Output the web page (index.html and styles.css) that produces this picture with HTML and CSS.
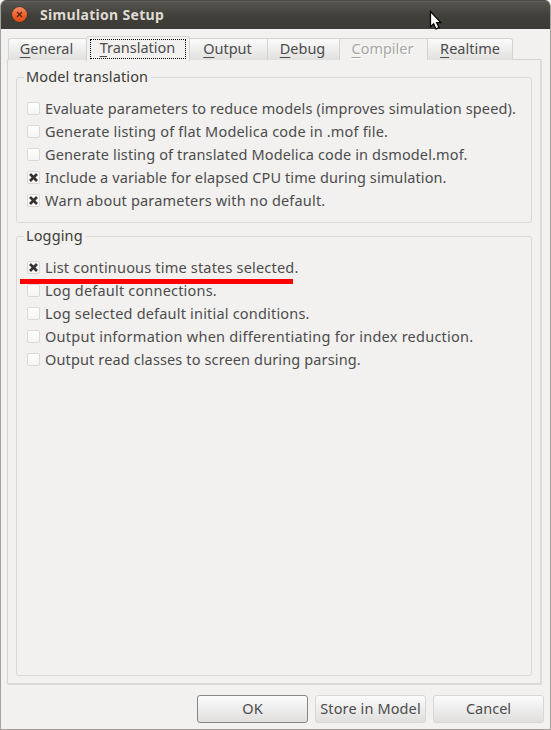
FILE: index.html
```html
<!DOCTYPE html>
<html lang="en">
<head>
<meta charset="utf-8">
<title>Simulation Setup</title>
<link rel="stylesheet" href="styles.css">
</head>
<body>
<div class="window">
  <header class="titlebar">
    <svg class="close" width="17" height="17" viewBox="0 0 17 17">
      <defs><linearGradient id="orange" x1="0" y1="0" x2="0" y2="1"><stop offset="0" stop-color="#f68a63"/><stop offset=".5" stop-color="#f0652f"/><stop offset="1" stop-color="#df4a12"/></linearGradient></defs>
      <circle cx="8.5" cy="8.5" r="8" fill="#32302b"/>
      <circle cx="8.5" cy="8.5" r="7.5" fill="url(#orange)"/>
      <path d="M6 6l5 5M11 6l-5 5" stroke="#4a2417" stroke-width="1.2"/>
    </svg>
    <h1 class="title">Simulation Setup</h1>
    <svg class="cursor" width="14" height="21" viewBox="0 0 14 21"><path d="M1.5 1.5v15.2l3.2-3 2.3 5.2 3-1.3-2.4-5h4.2z" fill="#fff" stroke="#000" stroke-width="1.2"/></svg>
  </header>
  <nav class="tabs">
    <div class="tab general"><span><u>G</u>eneral</span></div>
    <div class="tab active"><span class="focus"><span><u>T</u>ranslation</span></span></div>
    <div class="tab output"><span><u>O</u>utput</span></div>
    <div class="tab debug"><span><u>D</u>ebug</span></div>
    <div class="tab compiler"><span><u>C</u>ompiler</span></div>
    <div class="tab realtime"><span><u>R</u>ealtime</span></div>
  </nav>
  <main class="panel">
    <section class="group model">
      <h2 class="legend"><span>Model translation</span></h2>
      <div class="row"><i class="box"></i><span>Evaluate parameters to reduce models (improves simulation speed).</span></div>
      <div class="row loose"><i class="box"></i><span>Generate listing of flat Modelica code in .mof file.</span></div>
      <div class="row"><i class="box"></i><span>Generate listing of translated Modelica code in dsmodel.mof.</span></div>
      <div class="row tight"><i class="box"><svg class="mark" viewBox="0 0 9 9"><path d="M1 1l7 7M8 1l-7 7"/></svg></i><span>Include a variable for elapsed CPU time during simulation.</span></div>
      <div class="row loose"><i class="box"><svg class="mark" viewBox="0 0 9 9"><path d="M1 1l7 7M8 1l-7 7"/></svg></i><span>Warn about parameters with no default.</span></div>
    </section>
    <section class="group logging">
      <h2 class="legend"><span>Logging</span></h2>
      <div class="row loose marked"><i class="box"><svg class="mark" viewBox="0 0 9 9"><path d="M1 1l7 7M8 1l-7 7"/></svg></i><span>List continuous time states selected.</span></div>
      <div class="row loose"><i class="box"></i><span>Log default connections.</span></div>
      <div class="row loose"><i class="box"></i><span>Log selected default initial conditions.</span></div>
      <div class="row wide"><i class="box"></i><span>Output information when differentiating for index reduction.</span></div>
      <div class="row"><i class="box"></i><span>Output read classes to screen during parsing.</span></div>
    </section>
  </main>
  <footer class="actions">
    <button class="button primary">OK</button>
    <button class="button store">Store in Model</button>
    <button class="button">Cancel</button>
  </footer>
</div>
</body>
</html>
```
FILE: styles.css
```css
* { box-sizing: border-box; }
body { margin: 0; background: #fff; font: 14.5px/23px "Noto Sans", sans-serif; color: #4c4c4c; }
.window { height: 730px; border: 1px solid #a5a29e; border-top: 0; border-radius: 6px 6px 0 0; background: #f2f1f0; overflow: hidden; display: flex; flex-direction: column; }
.titlebar { position: relative; flex: none; height: 29px; margin: 0 -1px; padding-left: 11px; display: flex; align-items: center; background: linear-gradient(#4a4945 0, #4a4945 1px, #64625b 1px, #55534d 3px, #3f3e39 17px, #3c3b37); }
.close { flex: none; margin-right: 12px; }
.title { margin: 0; font: bold 14px/28px "Noto Sans", sans-serif; color: #dfdbd2; letter-spacing: .32px; }
.cursor { position: absolute; left: 429px; top: 10px; }
.tabs { flex: none; height: 31px; padding-left: 7px; display: flex; align-items: flex-end; position: relative; z-index: 1; }
.tab { height: 22px; padding: 0 2px 3px 0; display: flex; justify-content: center; align-items: center; border: 1px solid #d5d3d1; border-left: 0; border-bottom: 0; background: linear-gradient(#fbfbfb, #e1e0df); line-height: 18px; }
.tab u { text-decoration-thickness: 1px; text-underline-offset: 3px; }
.general { width: 78px; border-left: 1px solid #d5d3d1; border-right: 0; border-radius: 3px 0 0; }
.active { width: 104px; height: 25px; margin-bottom: -1px; padding: 0 1px 0 0; background: #f2f1f0; border-left: 1px solid #d5d3d1; border-radius: 3px 3px 0 0; }
.focus { width: 96px; height: 20px; border: 1px dotted #000; display: flex; justify-content: center; line-height: 15px; margin-bottom: 1px; }
.output { width: 78px; }
.debug { width: 72px; }
.compiler { width: 88px; background: #f2f1f0; color: #a8a7a6; text-shadow: 1px 1px #fff; }
.realtime { width: 85px; padding-right: 0; border-radius: 0 3px 0 0; }
.panel { flex: none; width: 535px; height: 626px; margin: -1px 0 0 6px; padding: 17px 8px 7px; border: 1px solid #d5d3d1; border-right: 2px solid #dcdad9; border-bottom: 2px solid #dcdad9; border-radius: 2px; display: flex; flex-direction: column; gap: 13px; }
.group { border: 1px solid #d9d8d6; border-radius: 3px; padding-left: 10px; }
.model { flex: none; height: 146px; }
.logging { flex: 1; }
.legend { margin: -13px 0 9px -3px; font: inherit; color: #3c3b37; height: 23px; letter-spacing: .12px; }
.legend span { background: #f2f1f0; padding: 0 3px 0 2px; }
.row { height: 23px; display: flex; align-items: center; position: relative; white-space: nowrap; letter-spacing: .13px; }
.loose { letter-spacing: .19px; }
.tight { letter-spacing: .09px; }
.wide { letter-spacing: .25px; }
.box { flex: none; width: 13px; height: 13px; margin-right: 5px; border: 1px solid #dbd9d7; border-radius: 2px; background: linear-gradient(#fff, #f5f4f3); display: grid; place-items: center; }
.mark { width: 9px; height: 9px; }
.mark path { stroke: #333; stroke-width: 2.7; fill: none; }
.logging .legend { margin-bottom: 9px; }
.marked::after { content: ""; position: absolute; left: -7px; top: 23px; width: 273px; height: 5px; background: #f00; z-index: 1; }
.actions { flex: none; display: flex; justify-content: flex-end; gap: 7px; padding: 10px 6px 0 0; }
.button { width: 111px; height: 28px; padding: 0 0 2px; border: 1px solid #d9d7d5; border-radius: 3px; background: linear-gradient(#fbfbfb, #e0dfde); font: inherit; color: inherit; line-height: 24px; }
.store { letter-spacing: .12px; }
.primary { border-color: #888784; }
```
